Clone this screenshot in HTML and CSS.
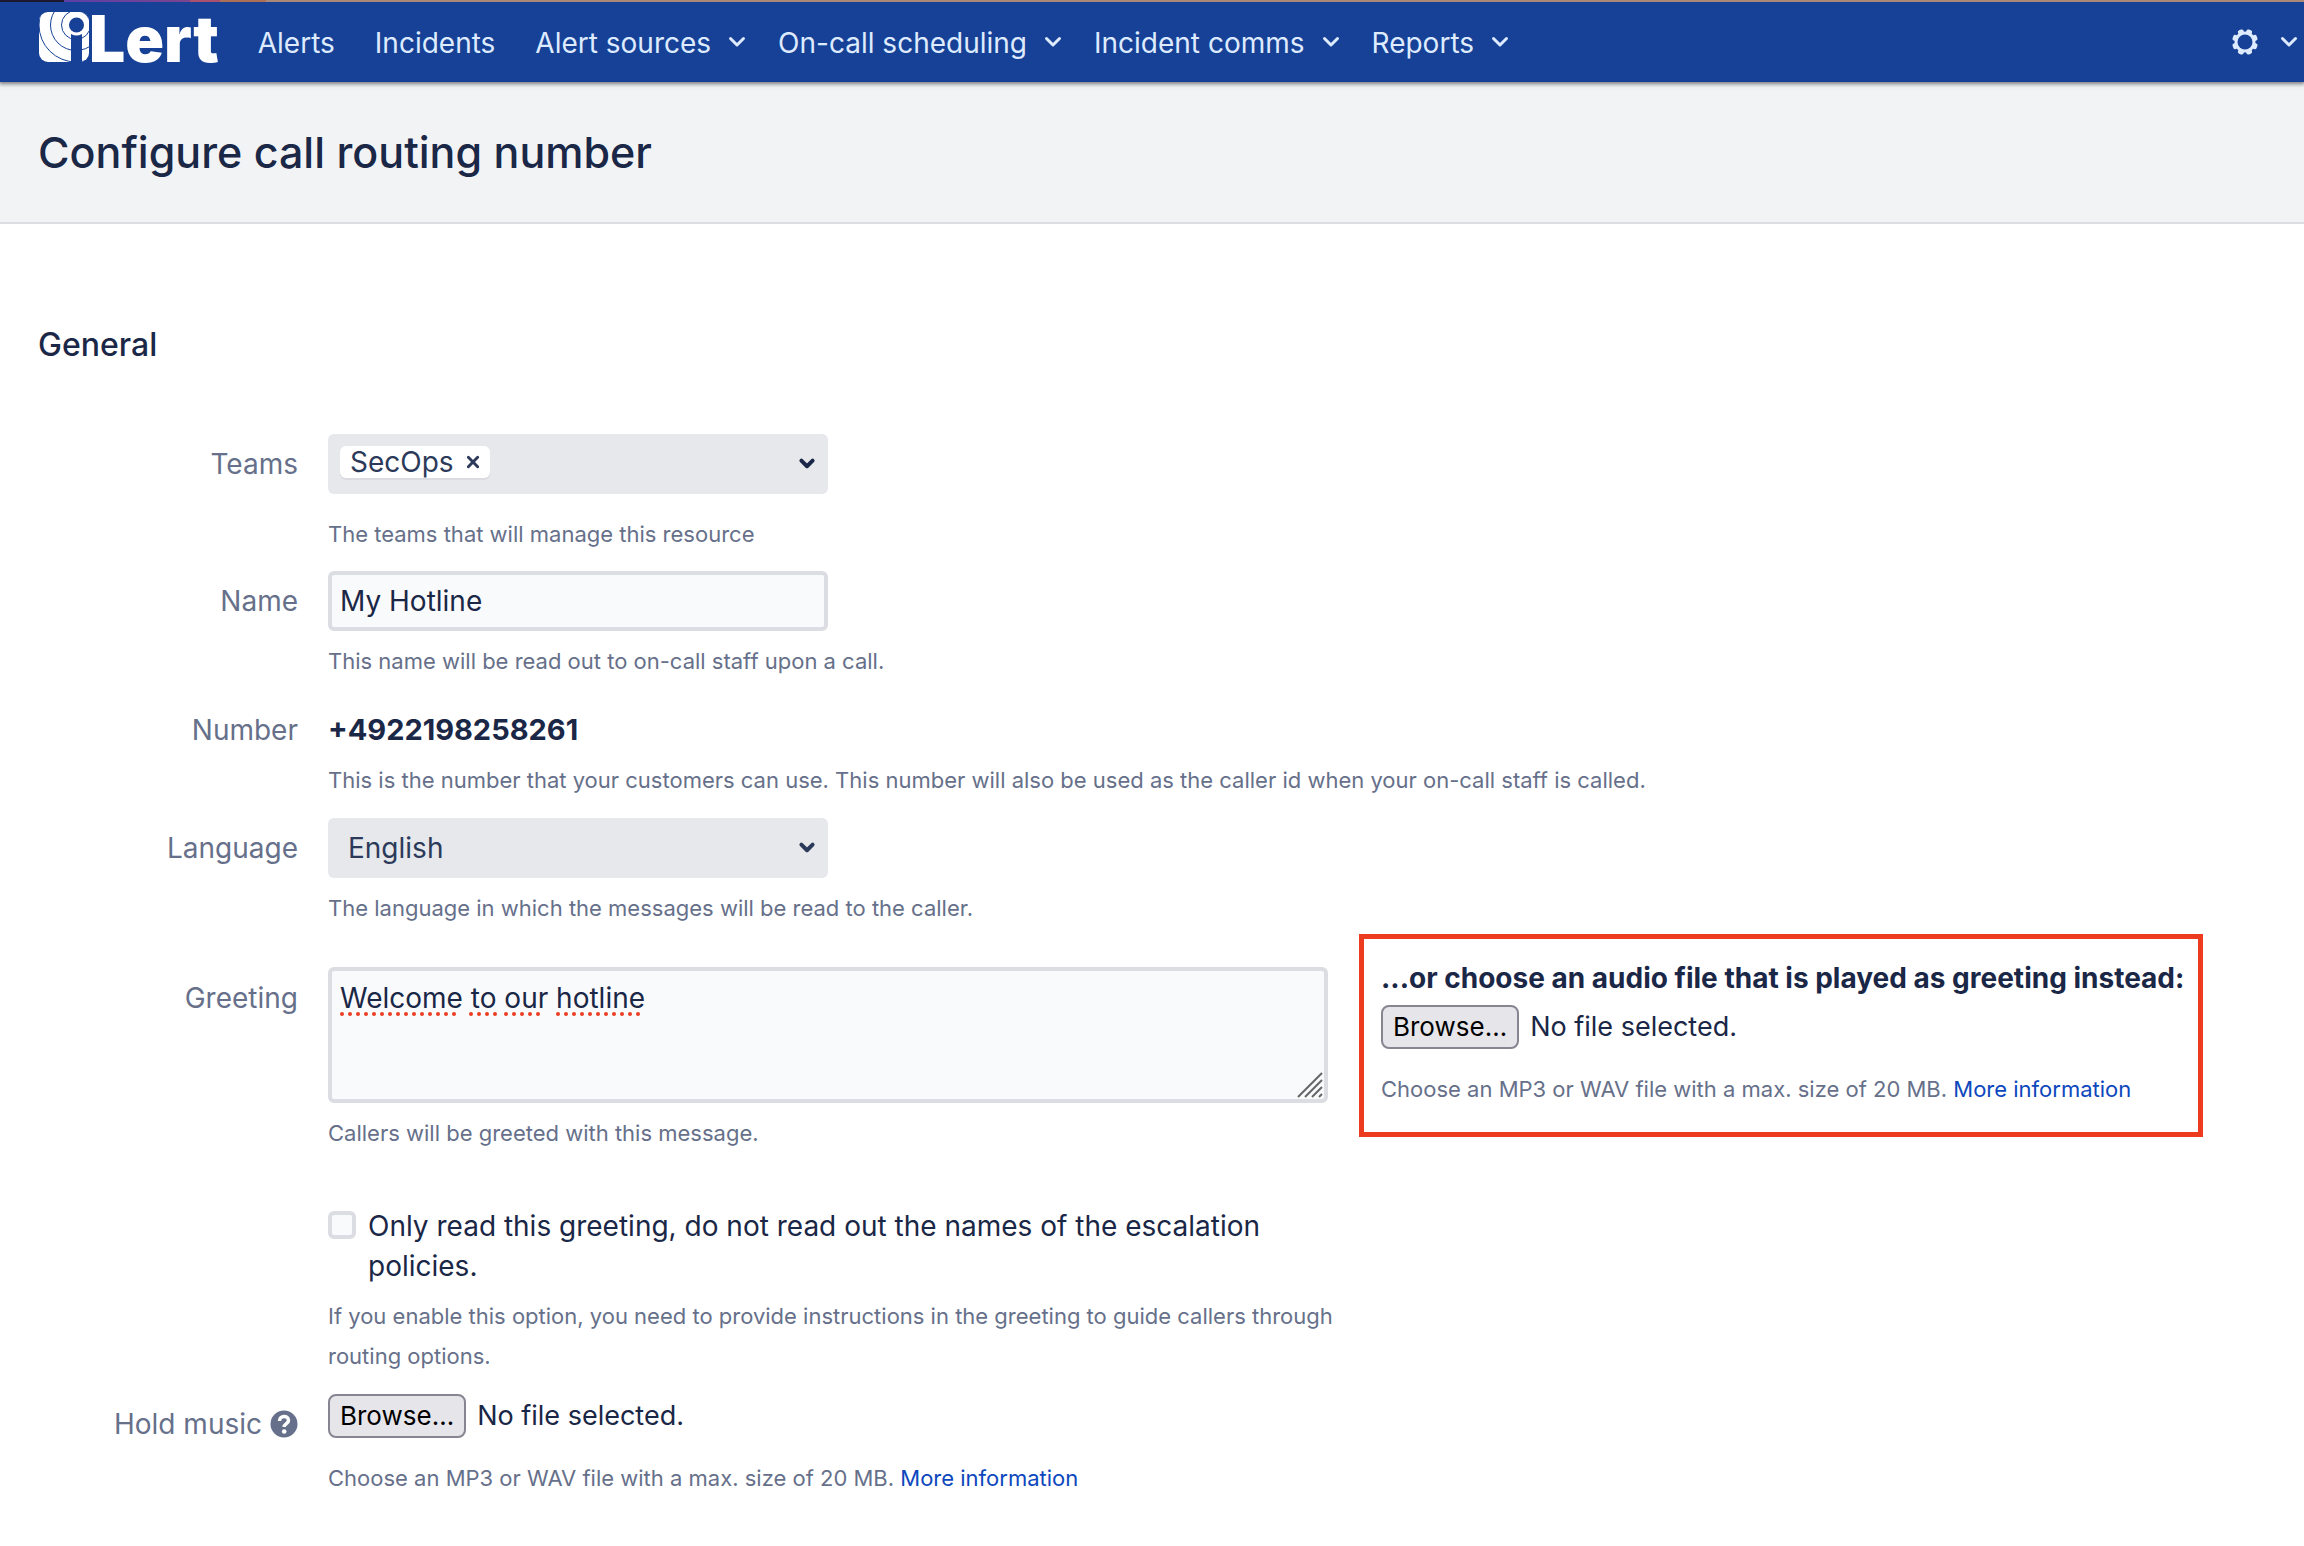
FILE: index.html
```html
<!DOCTYPE html>
<html lang="en">
<head>
<meta charset="utf-8">
<title>Configure call routing number</title>
<link rel="stylesheet" href="styles.css">
</head>
<body>
<svg class="defs" aria-hidden="true">
  <symbol id="chevron" viewBox="0 0 18 12"><path d="M2.500 2.500 9 9l6.500-6.500" fill="none" stroke="currentColor" stroke-width="3" stroke-linecap="round" stroke-linejoin="round"/></symbol>
  <symbol id="chevron-bold" viewBox="0 0 16 12"><path d="M3 3l5 5 5-5" fill="none" stroke="currentColor" stroke-width="3.500" stroke-linecap="round" stroke-linejoin="round"/></symbol>
</svg>

<header class="topbar">
  <a class="logo" href="#" aria-label="iLert">
    <svg class="logo-mark" viewBox="0 0 50 50" aria-hidden="true">
      <defs><clipPath id="mark"><rect width="50" height="50" rx="9"/></clipPath></defs>
      <g clip-path="url(#mark)">
        <rect width="50" height="50" fill="#fff"/>
        <g fill="none" stroke="#164196" stroke-width="1">
          <circle cx="37" cy="13" r="14.500"/>
          <circle cx="37" cy="13" r="25.500"/>
          <circle cx="37" cy="13" r="37"/>
        </g>
        <path d="M32 22q5.500 3 11 0V50H32z" fill="#164196"/>
        <circle cx="37.500" cy="13" r="10" fill="#fff"/>
        <circle cx="37.500" cy="13" r="7.500" fill="#164196"/>
      </g>
    </svg>
    <span class="logo-text">Lert</span>
  </a>
  <nav class="nav">
    <a href="#">Alerts</a>
    <a href="#">Incidents</a>
    <a href="#">Alert sources <svg class="chev"><use href="#chevron"/></svg></a>
    <a href="#">On-call scheduling <svg class="chev"><use href="#chevron"/></svg></a>
    <a href="#">Incident comms <svg class="chev"><use href="#chevron"/></svg></a>
    <a href="#">Reports <svg class="chev"><use href="#chevron"/></svg></a>
  </nav>
  <button class="settings" type="button" aria-label="Settings">
    <svg class="gear" viewBox="-14 -14 28 28" aria-hidden="true">
      <g fill="currentColor">
        <rect x="-3" y="-13" width="6" height="26" rx="2" transform="rotate(22.500)"/>
        <rect x="-3" y="-13" width="6" height="26" rx="2" transform="rotate(67.500)"/>
        <rect x="-3" y="-13" width="6" height="26" rx="2" transform="rotate(112.500)"/>
        <rect x="-3" y="-13" width="6" height="26" rx="2" transform="rotate(157.500)"/>
        <circle r="10.500"/>
      </g>
      <circle r="7.500" fill="#164196"/>
    </svg>
    <svg class="chev"><use href="#chevron"/></svg>
  </button>
</header>

<div class="page-head"><h1>Configure call routing number</h1></div>

<main>
  <h2>General</h2>
  <form class="form">
    <div class="row">
      <label class="label" for="teams">Teams</label>
      <div class="content">
        <div class="control multi">
          <span class="tag">SecOps
            <button type="button" class="remove" aria-label="Remove SecOps"><svg viewBox="0 0 12 12"><path d="M2 2l8 8M10 2l-8 8" stroke="currentColor" stroke-width="2.500" stroke-linecap="round"/></svg></button>
          </span>
          <button type="button" id="teams" class="open" aria-label="Teams"><svg class="chev-bold"><use href="#chevron-bold"/></svg></button>
        </div>
        <p class="hint far">The teams that will manage this resource</p>
      </div>
    </div>

    <div class="row">
      <label class="label" for="name">Name</label>
      <div class="content">
        <input class="control text" id="name" type="text" value="My Hotline">
        <p class="hint">This name will be read out to on-call staff upon a call.</p>
      </div>
    </div>

    <div class="row number-row">
      <span class="label">Number</span>
      <div class="content">
        <strong class="number">+4922198258261</strong>
        <p class="hint">This is the number that your customers can use. This number will also be used as the caller id when your on-call staff is called.</p>
      </div>
    </div>

    <div class="row">
      <label class="label" for="language">Language</label>
      <div class="content">
        <div class="select-wrap">
          <select class="control" id="language"><option>English</option></select>
          <svg class="chev-bold"><use href="#chevron-bold"/></svg>
        </div>
        <p class="hint">The language in which the messages will be read to the caller.</p>
      </div>
    </div>

    <div class="row greeting-row">
      <label class="label" for="greeting">Greeting</label>
      <div class="content greeting">
        <div class="message">
          <div class="area-wrap">
            <textarea id="greeting" spellcheck="false">Welcome to our hotline</textarea>
            <svg class="squiggle" aria-hidden="true"><path d="M2 2H120M131 2H157M166 2H206M218 2H305" stroke="#ed3b1f" stroke-width="4" stroke-linecap="round" stroke-dasharray="0 8"/></svg>
            <svg class="grip" viewBox="0 0 26 26" aria-hidden="true"><path d="M1 25 25 1M8 25 25 8M15 25l10-10M22 25l3-3" stroke="#666" stroke-width="2"/></svg>
          </div>
          <p class="hint">Callers will be greeted with this message.</p>
        </div>
        <div class="audio">
          <strong>...or choose an audio file that is played as greeting instead:</strong>
          <div class="file"><button type="button">Browse…</button><span>No file selected.</span></div>
          <p class="hint far">Choose an MP3 or WAV file with a max. size of 20 MB. <a href="#">More information</a></p>
        </div>
      </div>
    </div>

    <div class="row option-row">
      <div class="content option">
        <label class="check"><input type="checkbox"><span>Only read this greeting, do not read out the names of the escalation policies.</span></label>
        <p class="hint">If you enable this option, you need to provide instructions in the greeting to guide callers through routing options.</p>
      </div>
    </div>

    <div class="row">
      <label class="label" for="music">Hold music
        <svg class="help" viewBox="0 0 28 28" aria-hidden="true"><circle cx="14" cy="14" r="13.500" fill="currentColor"/><path d="M9.500 11c0-6 9-6 9-.5 0 3.200-4.300 3.200-4.300 6.500" fill="none" stroke="#fff" stroke-width="3.500"/><circle cx="14.200" cy="21.500" r="2.300" fill="#fff"/></svg>
      </label>
      <div class="content">
        <div class="file"><button type="button" id="music">Browse…</button><span>No file selected.</span></div>
        <p class="hint far">Choose an MP3 or WAV file with a max. size of 20 MB. <a href="#">More information</a></p>
      </div>
    </div>
  </form>
</main>
</body>
</html>
```
FILE: styles.css
```css
* { box-sizing: border-box; }

body {
  margin: 0;
  background: #fff;
  color: #1a2746;
  font: 400 28px/40px Inter, "Liberation Sans", sans-serif;
}

h1, h2, p { margin: 0; }
a { color: #0d47bd; text-decoration: none; }
button, input, select, textarea { font: inherit; color: inherit; margin: 0; }
svg { flex: none; }
.defs { display: none; }

/* Top bar */
.topbar {
  position: relative;
  display: flex;
  align-items: center;
  height: 82px;
  padding: 2px 6px 0 39px;
  background: #164196;
  color: #deebff;
  box-shadow: 0 1px 4px 1px rgba(0, 0, 0, .5);
}
.topbar::before {
  content: "";
  position: absolute;
  inset: 0 0 auto;
  height: 2px;
  background: linear-gradient(90deg, #1c1830 64px, #5a3fa8 64px, #7b4590 190px, #a8506e 190px, #a8506e 220px, #ab7055 220px, #ab7055 266px, #a98877 266px);
}
.logo { display: flex; align-items: center; height: 80px; color: #fff; }
.logo-mark { width: 50px; height: 50px; margin-bottom: 10px; }
.logo-text { padding-bottom: 6px; font-size: 64px; font-weight: 900; line-height: 74px; }
.nav { display: flex; gap: 40px; margin-left: 39px; padding-top: 2px; }
.nav a { display: flex; align-items: center; gap: 17px; color: inherit; white-space: nowrap; }
.nav a:has(svg) { margin-right: -8px; }
.nav .chev { margin-bottom: 2px; }
.chev { width: 18px; height: 12px; }
.settings {
  display: flex;
  align-items: center;
  gap: 21px;
  margin-left: auto;
  padding: 0;
  border: 0;
  background: none;
}
.gear { width: 28px; height: 28px; }

/* Page heading */
.page-head {
  padding: 40px 38px;
  background: #f2f3f5;
  border-bottom: 2px solid #dcdde3;
}
h1 { font-size: 43px; font-weight: 500; line-height: 60px; }

main { padding: 101px 38px 16px; }
h2 { font-size: 32px; font-weight: 500; line-height: 40px; }

/* Form */
.form { margin-top: 69px; }
.row {
  display: grid;
  grid-template-columns: 260px minmax(0, 1fr);
  column-gap: 30px;
  margin-bottom: 17px;
}
.row:last-child { margin-bottom: 0; }
.label {
  display: flex;
  justify-content: flex-end;
  align-items: center;
  align-self: start;
  gap: 8px;
  padding-top: 10px;
  color: #66708a;
}
.content { grid-column: 2; }
.hint { margin-top: 10px; font-size: 22px; color: #66708a; }
.hint.far { margin-top: 20px; }

.control {
  display: block;
  width: 500px;
  max-width: 100%;
  height: 60px;
  border: 0;
  border-radius: 6px;
  background: #e7e8ec;
}
.text { padding: 0 8px; border: 4px solid #dcdde3; background: #f9fafc; }

.multi { display: flex; align-items: center; justify-content: space-between; padding: 0 12px; }
.tag {
  display: flex;
  align-items: center;
  gap: 12px;
  height: 32px;
  padding: 0 10px;
  margin-bottom: 4px;
  border-radius: 6px;
  background: #fff;
  box-shadow: 0 2px 0 #dadce1;
  color: #2c3a5a;
}
.remove, .open { display: flex; padding: 0; border: 0; background: none; }
.remove svg { width: 14px; height: 14px; }
.chev-bold { width: 18px; height: 14px; }

.select-wrap { position: relative; width: 500px; max-width: 100%; color: #2c3a5a; }
.select-wrap select { appearance: none; padding: 0 20px; }
.select-wrap .chev-bold { position: absolute; right: 12px; top: 23px; pointer-events: none; }

.number-row { margin: 29px 0 18px; }
.number-row .label { padding-top: 0; }
.number { display: block; font-size: 29px; font-weight: 700; }

.greeting-row { margin-top: 6px; margin-bottom: 53px; }
.greeting-row .label { padding-top: 44px; }
.row:has(+ .greeting-row) { margin-bottom: 6px; }
.greeting { display: flex; align-items: flex-start; gap: 31px; }
.message { flex: 0 1 1000px; padding-top: 33px; }
.area-wrap { position: relative; }
textarea {
  display: block;
  width: 100%;
  height: 136px;
  padding: 7px 8px;
  border: 4px solid #dcdde3;
  border-radius: 6px;
  background: #f9fafc;
  resize: none;
}
.squiggle { position: absolute; left: 12px; top: 45px; width: 310px; height: 4px; pointer-events: none; }
.grip { position: absolute; right: 5px; bottom: 5px; width: 26px; height: 26px; }

.audio { padding: 19px 14px 23px 17px; border: 5px solid #ed3b1f; white-space: nowrap; }
.audio strong { display: block; margin-bottom: 7px; font-weight: 700; }
.file { display: flex; align-items: center; gap: 11px; font-size: 27px; }
.file button {
  height: 44px;
  padding: 0 10px;
  border: 2px solid #878592;
  border-radius: 8px;
  background: #e6e5ea;
  color: #000;
  font-size: 26px;
  line-height: 38px;
}

.option { max-width: 1024px; }
.option-row { margin-bottom: 18px; }
.check { display: flex; align-items: flex-start; gap: 12px; }
.check input {
  flex: none;
  appearance: none;
  width: 28px;
  height: 28px;
  margin-top: 5px;
  border: 4px solid #dcdde3;
  border-radius: 6px;
  background: #f9fafc;
}
.help { width: 28px; height: 28px; }
```
